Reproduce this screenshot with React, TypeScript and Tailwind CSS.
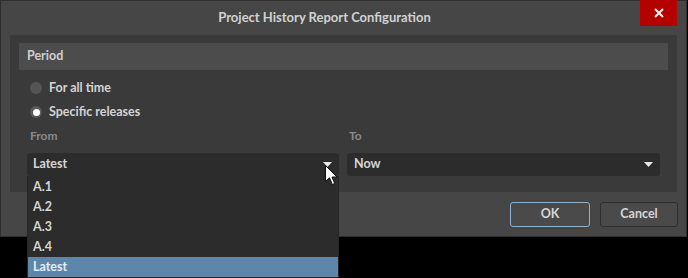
import React from "react";

function Arrow() {
  return (
    <svg width="9" height="5" viewBox="0 0 9 5" className="shrink-0">
      <path d="M0 0 H9 L4.5 5 Z" fill="#e8e8e8" />
    </svg>
  );
}

function Radio({ checked, label }: { checked?: boolean; label: string }) {
  return (
    <div className="flex h-[24px] items-center pl-[11px]">
      <div
        className={
          checked
            ? "flex h-[12px] w-[12px] items-center justify-center rounded-full bg-[#5a5a5a]"
            : "h-[12px] w-[12px] rounded-full bg-[#555555]"
        }
      >
        {checked && <div className="h-[7px] w-[7px] rounded-full bg-white" />}
      </div>
      <span className="ml-[7px] text-[12.5px] font-bold text-[#d4d4d4]">{label}</span>
    </div>
  );
}

export default function App() {
  const items = ["A.1", "A.2", "A.3", "A.4"];
  return (
    <div
      className="relative h-[278px] w-[688px] overflow-hidden bg-black"
      style={{ fontFamily: "Lato, 'Noto Sans', sans-serif" }}
    >
      <div className="flex h-[237px] w-[687px] flex-col border border-[#2e2e2e] bg-[#464646]">
        <div className="relative flex h-[34px] items-center justify-center pr-[38px]">
          <span className="text-[13px] font-bold text-[#d2d2d2]">Project History Report Configuration</span>
          <div className="absolute right-[9px] top-[-1px] flex h-[26px] w-[37px] items-center justify-center bg-[#b50000]">
            <svg width="10" height="10" viewBox="0 0 10 10">
              <path d="M1 1 L9 9 M9 1 L1 9" stroke="#f4f4f4" strokeWidth="2" />
            </svg>
          </div>
        </div>
        <div className="mx-[9px] h-[157px] bg-[#3a3a3a] px-[9px] pt-[8px]">
          <div className="flex h-[27px] items-center bg-[#4c4c4c] pl-[8px] text-[12.5px] font-bold text-[#d0d0d0]">
            Period
          </div>
          <div className="mt-[6px]">
            <Radio label="For all time" />
            <Radio checked label="Specific releases" />
          </div>
          <div className="grid grid-cols-[312px_313px] gap-x-[8px] pl-[8px]">
            <div className="flex h-[24px] items-center pl-[3px] text-[12px] font-bold text-[#8a8a8a]">From</div>
            <div className="flex h-[24px] items-center pl-[2px] text-[12px] font-bold text-[#8a8a8a]">To</div>
            <div className="relative mt-[5px]">
              <div className="flex h-[23px] items-center justify-between rounded-[3px] bg-[#2c2c2c] pl-[6px] pr-[7px]">
                <span className="text-[12.5px] font-bold text-[#d6d6d6]">Latest</span>
                <Arrow />
              </div>
              <div className="absolute left-0 top-full z-10 flex h-[102px] w-[312px] flex-col border-x border-b border-[#262626] bg-[#2c2c2c] pt-[1px]">
                {items.map((t) => (
                  <div key={t} className="flex h-[20px] items-center pl-[5px] text-[12.5px] font-bold text-[#d6d6d6]">
                    {t}
                  </div>
                ))}
                <div className="flex h-[20px] items-center bg-[#5e85aa] pl-[5px] text-[12.5px] font-bold text-[#e4ecf4]">
                  Latest
                </div>
              </div>
              <svg
                className="absolute left-[298px] top-[12px] z-20"
                width="13"
                height="21"
                viewBox="0 0 13 21"
              >
                <path
                  d="M0.5 0.5 L0.5 16.5 L4.5 12.8 L7.3 19.5 L9.7 18.5 L7 12 L12 12 Z"
                  fill="#ffffff"
                  stroke="#111111"
                  strokeWidth="1"
                  strokeLinejoin="round"
                />
              </svg>
            </div>
            <div className="mt-[5px] flex h-[23px] items-center justify-between rounded-[3px] bg-[#2c2c2c] pl-[7px] pr-[7px]">
              <span className="text-[12.5px] font-bold text-[#d6d6d6]">Now</span>
              <Arrow />
            </div>
          </div>
        </div>
        <div className="flex justify-end gap-[10px] pr-[8px] pt-[10px]">
          <div className="flex h-[25px] w-[80px] items-center justify-center rounded-[3px] border border-[#8fb0cc] bg-[#4a4a4a] text-[12.5px] font-bold text-[#d6d6d6]">
            OK
          </div>
          <div className="flex h-[25px] w-[78px] items-center justify-center rounded-[3px] border border-[#2e2e2e] bg-[#4a4a4a] text-[12.5px] font-bold text-[#d6d6d6]">
            Cancel
          </div>
        </div>
      </div>
    </div>
  );
}
